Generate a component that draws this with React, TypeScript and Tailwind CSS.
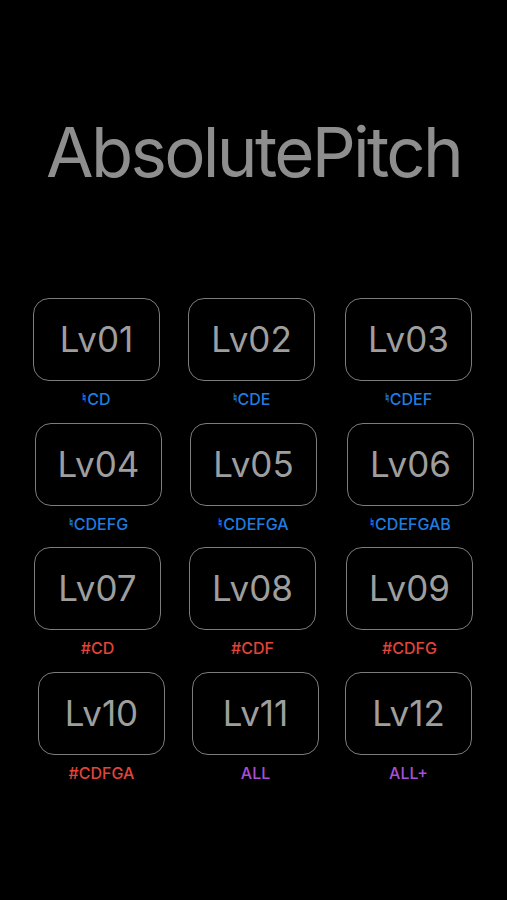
const font = { fontFamily: '"Inter", "Liberation Sans", sans-serif' };

type Level = { name: string; tag: string; kind: "natural" | "sharp" | "all"; ml: string };

const ROWS: { levels: Level[]; mt: string }[] = [
  {
    mt: "mt-0",
    levels: [
      { name: "Lv01", tag: "CD", kind: "natural", ml: "ml-[33px]" },
      { name: "Lv02", tag: "CDE", kind: "natural", ml: "ml-[28px]" },
      { name: "Lv03", tag: "CDEF", kind: "natural", ml: "ml-[30px]" },
    ],
  },
  {
    mt: "mt-[16px]",
    levels: [
      { name: "Lv04", tag: "CDEFG", kind: "natural", ml: "ml-[35px]" },
      { name: "Lv05", tag: "CDEFGA", kind: "natural", ml: "ml-[28px]" },
      { name: "Lv06", tag: "CDEFGAB", kind: "natural", ml: "ml-[30px]" },
    ],
  },
  {
    mt: "mt-[15px]",
    levels: [
      { name: "Lv07", tag: "#CD", kind: "sharp", ml: "ml-[34px]" },
      { name: "Lv08", tag: "#CDF", kind: "sharp", ml: "ml-[28px]" },
      { name: "Lv09", tag: "#CDFG", kind: "sharp", ml: "ml-[30px]" },
    ],
  },
  {
    mt: "mt-[16px]",
    levels: [
      { name: "Lv10", tag: "#CDFGA", kind: "sharp", ml: "ml-[38px]" },
      { name: "Lv11", tag: "ALL", kind: "all", ml: "ml-[27px]" },
      { name: "Lv12", tag: "ALL+", kind: "all", ml: "ml-[26px]" },
    ],
  },
];

function Tag({ level }: { level: Level }) {
  if (level.kind === "natural") {
    return (
      <span className="text-[16px] font-medium leading-none text-[#1f7ce0]">
        <span className="relative top-[-3px] mr-[1px] text-[12px] font-bold">♮</span>
        {level.tag}
      </span>
    );
  }
  return (
    <span
      className={`text-[16px] font-medium leading-none ${level.kind === "sharp" ? "text-[#e2443a]" : "text-[#a74fd8]"}`}
    >
      {level.tag}
    </span>
  );
}

function LevelButton({ level }: { level: Level }) {
  return (
    <div className={`flex w-[127px] flex-col items-center ${level.ml}`}>
      <button
        type="button"
        className="flex h-[83px] w-[127px] items-center justify-center rounded-[16px] border-[1.5px] border-[#7c7c7c] bg-black"
      >
        <span className="text-[35px] leading-none text-[#9e9e9e]">{level.name}</span>
      </button>
      <div className="mt-[10px] flex h-[16px] items-center">
        <Tag level={level} />
      </div>
    </div>
  );
}

export default function App() {
  return (
    <div className="h-[900px] w-[507px] overflow-hidden bg-black" style={font}>
      <h1 className="pt-[112px] pl-[46px] text-[69px] leading-[80px] tracking-[-2.7px] text-[#8e8e8e]">
        AbsolutePitch
      </h1>
      <div className="mt-[106px] flex flex-col">
        {ROWS.map((row, i) => (
          <div key={i} className={`flex ${row.mt}`}>
            {row.levels.map((lv) => (
              <LevelButton key={lv.name} level={lv} />
            ))}
          </div>
        ))}
      </div>
    </div>
  );
}
